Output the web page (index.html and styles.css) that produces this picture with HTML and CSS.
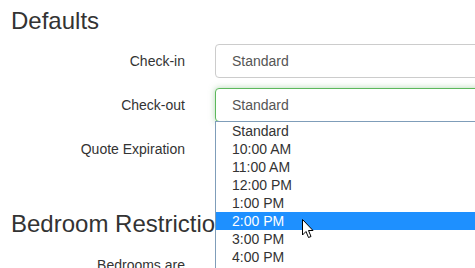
FILE: index.html
```html
<!DOCTYPE html>
<html lang="en">
<head>
  <meta charset="UTF-8">
  <meta name="viewport" content="width=device-width, initial-scale=1.0">
  <title>Defaults</title>
  <link rel="stylesheet" href="styles.css">
</head>
<body>
  <div class="page">
    <h3>Defaults</h3>

    <!-- Default times -->
    <div class="form-group">
      <label>Check-in</label>
      <div class="control">
        <div class="select">Standard</div>
      </div>
    </div>
    <div class="form-group">
      <label>Check-out</label>
      <div class="control">
        <div class="select focused">Standard</div>
        <ul class="options">
          <li>Standard</li>
          <li>10:00 AM</li>
          <li>11:00 AM</li>
          <li>12:00 PM</li>
          <li>1:00 PM</li>
          <li class="hover">2:00 PM
            <svg class="cursor" width="13" height="20" viewBox="0 0 13 20">
              <path d="M0.5 0.5 L0.5 16 L4 12.5 L6.5 18.5 L9 17.5 L6.5 11.5 L11 11.5 Z" fill="#fff" stroke="#000" stroke-width="1" stroke-linejoin="miter"/>
            </svg>
          </li>
          <li>3:00 PM</li>
          <li>4:00 PM</li>
          <li>5:00 PM</li>
        </ul>
      </div>
    </div>
    <div class="form-group">
      <label>Quote Expiration</label>
      <div class="control">
        <div class="select">7 days</div>
      </div>
    </div>

    <h3 class="section">Bedroom Restrictions</h3>
    <div class="form-group">
      <label>Bedrooms are</label>
      <div class="control">
        <div class="select">Optional</div>
      </div>
    </div>
  </div>
</body>
</html>
```

FILE: styles.css
```css
body {
  margin: 0;
  font-family: "Liberation Sans", Arial, sans-serif;
  font-size: 14px;
  line-height: 20px;
  color: #333;
  background: #fff;
  overflow: hidden;
}

.page {
  padding-left: 10px;
}

h3 {
  font-size: 24px;
  font-weight: 500;
  line-height: 1.1;
  margin: 8px 0 10px 1px;
}

h3.section {
  margin-top: 45px;
}

.form-group {
  display: grid;
  grid-template-columns: 175px 1fr;
  column-gap: 30px;
  margin-bottom: 10px;
}

.form-group label {
  text-align: right;
  padding-top: 7px;
}

.control {
  position: relative;
}

.select {
  width: 300px;
  height: 34px;
  box-sizing: border-box;
  padding: 6px 16px;
  border: 1px solid #ccc;
  border-radius: 4px;
  color: #555;
  background: #fff;
}

.select.focused {
  border-color: #5cb85c;
  box-shadow: 0 0 6px rgba(103, 177, 104, 0.5);
}

/* open dropdown list */
.options {
  position: absolute;
  top: 33px;
  left: 0;
  width: 300px;
  margin: 0;
  padding: 0;
  list-style: none;
  background: #fff;
  border: 1px solid #7f9db9;
  z-index: 5;
}

.options li {
  position: relative;
  height: 18px;
  line-height: 18px;
  padding-left: 16px;
  color: #333;
}

.options li.hover {
  background: #1e90ff;
  color: #fff;
}

.cursor {
  position: absolute;
  left: 86px;
  top: 7px;
}
```
